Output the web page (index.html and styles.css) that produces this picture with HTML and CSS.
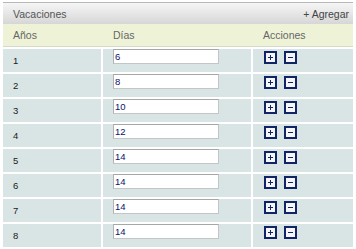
FILE: index.html
```html
<!DOCTYPE html>
<html>
<head>
<meta charset="utf-8">
<link rel="stylesheet" href="styles.css">
</head>
<body>
<div class="panel">
  <div class="titlebar">
    <span class="title">Vacaciones</span>
    <a class="add">+ Agregar</a>
  </div>
  <div class="colhead">
    <span>Años</span>
    <span>Días</span>
    <span>Acciones</span>
  </div>
  <div class="grid">
    <div class="c num">1</div><div class="c field"><input class="inp" value="6"></div><div class="c acts"><span class="btn plus"></span><span class="btn minus"></span></div>
    <div class="c num">2</div><div class="c field"><input class="inp" value="8"></div><div class="c acts"><span class="btn plus"></span><span class="btn minus"></span></div>
    <div class="c num">3</div><div class="c field"><input class="inp" value="10"></div><div class="c acts"><span class="btn plus"></span><span class="btn minus"></span></div>
    <div class="c num">4</div><div class="c field"><input class="inp" value="12"></div><div class="c acts"><span class="btn plus"></span><span class="btn minus"></span></div>
    <div class="c num">5</div><div class="c field"><input class="inp" value="14"></div><div class="c acts"><span class="btn plus"></span><span class="btn minus"></span></div>
    <div class="c num">6</div><div class="c field"><input class="inp" value="14"></div><div class="c acts"><span class="btn plus"></span><span class="btn minus"></span></div>
    <div class="c num">7</div><div class="c field"><input class="inp" value="14"></div><div class="c acts"><span class="btn plus"></span><span class="btn minus"></span></div>
    <div class="c num">8</div><div class="c field"><input class="inp" value="14"></div><div class="c acts"><span class="btn plus"></span><span class="btn minus"></span></div>
  </div>
</div>
</body>
</html>
```
FILE: styles.css
```css
html, body {
  margin: 0;
  padding: 0;
  background: #fff;
}
body {
  font-family: "Liberation Sans", Arial, sans-serif;
}
.panel {
  width: 350px;
  margin: 2px 0 0 3px;
}
.titlebar {
  height: 21px;
  border-top: 1px solid #b8b8b8;
  background: linear-gradient(#f6f6f6, #d6d6d6);
  display: flex;
  align-items: center;
  justify-content: space-between;
  padding: 0 4px 0 10px;
  font-size: 10.5px;
}
.title { color: #555; }
.add { color: #444; }
.colhead {
  height: 22px;
  background: #eef3d7;
  border-bottom: 1px solid #d6dacb;
  display: grid;
  grid-template-columns: 100px 150px 100px;
  align-items: center;
  font-size: 10.5px;
  color: #666;
}
.colhead span { padding-left: 10px; }
.grid {
  margin-top: 2px;
  display: grid;
  grid-template-columns: 98px 148px 100px;
  grid-auto-rows: 23px;
  gap: 2px;
}
.c {
  background: #d9e5e5;
}
.num {
  display: flex;
  align-items: center;
  padding-left: 10px;
  font-size: 9.5px;
  color: #1a1a1a;
}
.field {
  padding-left: 10px;
}
.inp {
  box-sizing: border-box;
  width: 106px;
  height: 15px;
  margin: 0;
  padding: 0 0 0 1px;
  border: 1px solid #c2c6c6;
  border-top-color: #a6a8a8;
  border-left-color: #b2b4b4;
  background: #fff;
  font-family: "Liberation Sans", Arial, sans-serif;
  font-size: 9.5px;
  color: #10106a;
  display: block;
  outline: none;
}
.acts {
  display: flex;
  gap: 7px;
  padding: 2px 0 0 11px;
  align-items: flex-start;
}
.btn {
  box-sizing: border-box;
  width: 13px;
  height: 13px;
  border: 2px solid #0f2566;
  background: #f6f6fa;
  position: relative;
}
.btn::before, .plus::after {
  content: "";
  position: absolute;
  background: #0f2566;
}
.btn::before {
  left: 2px;
  top: 3.75px;
  width: 5px;
  height: 1.5px;
}
.plus::after {
  left: 3.75px;
  top: 2px;
  width: 1.5px;
  height: 5px;
}
```
